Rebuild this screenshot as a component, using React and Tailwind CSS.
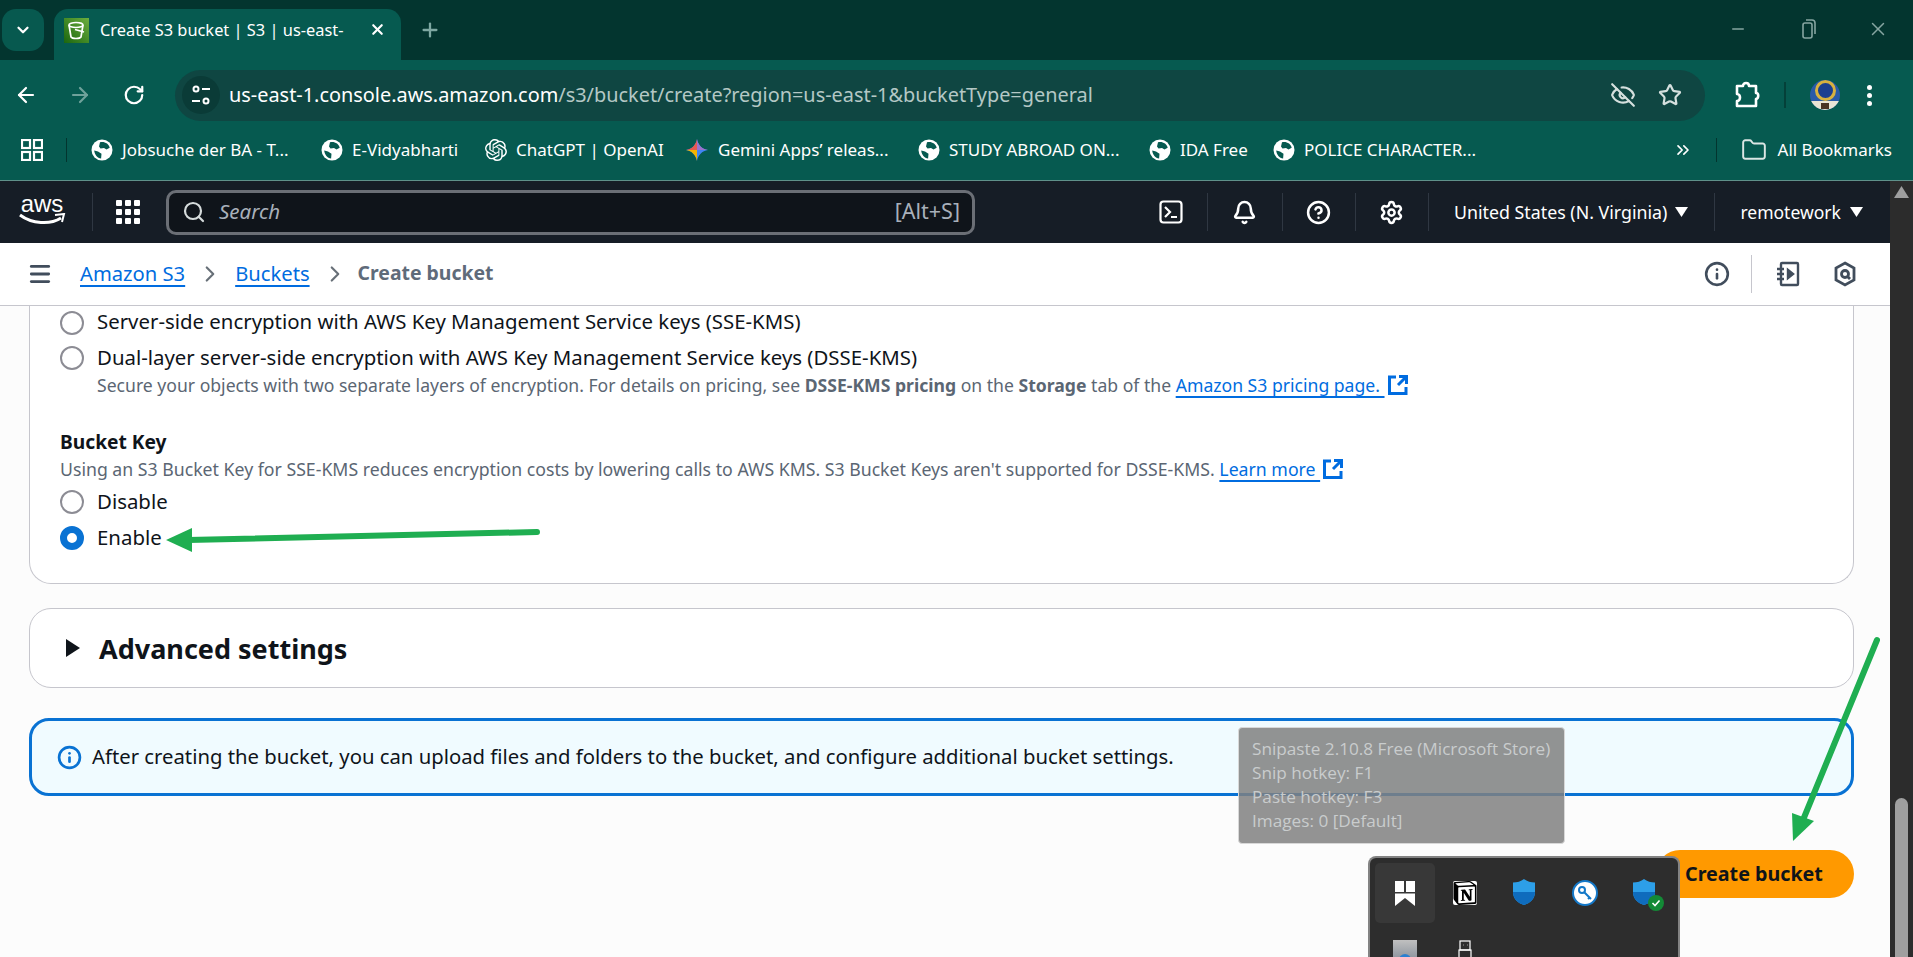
import { ArrowLeft, ArrowRight, RotateCw, Star, EyeOff, ChevronsRight, Folder, X, Plus, Minus, Search, Bell, CircleHelp, Settings, Info, ChevronDown, ChevronRight, Menu } from 'lucide-react';
import { SiOpenai, SiNotion } from 'react-icons/si';

function GlobeFav() {
  return (
    <svg width="22" height="22" viewBox="0 0 22 22" className="shrink-0">
      <circle cx="11" cy="11" r="10.500" fill="#fff" />
      <path d="M9 3.200c2.500-.6 5-.2 7 1.300 1.500 1.200 2.300 2.600 2.700 4.200l-3.200 1.800-2.500-1.500-3.500.4L8 7.500z" fill="#065a50" />
      <path d="M3.200 11.500l3.800 1 3.500 2.300-.4 4.800c-3.600-.4-6.500-3.800-6.900-8.100z" fill="#065a50" />
    </svg>
  );
}

function GeminiFav() {
  return (
    <svg width="24" height="24" viewBox="0 0 24 24" className="shrink-0">
      <path d="M12 1c1 6 5 10 11 11-6 1-10 5-11 11C11 17 7 13 1 12 7 11 11 7 12 1z" fill="#4285f4" />
      <path d="M12 1c1 6 5 10 11 11H12z" fill="#9b72cb" />
      <path d="M1 12c6-1 10-5 11-11v11z" fill="#e8594f" />
      <path d="M1 12h11v11C11 17 7 13 1 12z" fill="#f4b400" />
    </svg>
  );
}

function Bookmark({ icon, label, ml, textW }) {
  return (
    <div className={`flex items-center shrink-0 ${ml}`}>
      {icon}
      <span className={`ml-[9px] text-[17px] text-white whitespace-nowrap ${textW}`}>{label}</span>
    </div>
  );
}

function ExtLink() {
  return (
    <svg width="22" height="22" viewBox="0 0 22 22" fill="none" stroke="#006ce0" strokeWidth="3" className="inline-block align-[-4px] ml-[2px]">
      <path d="M9 3H2.500v16.500H19V13" />
      <path d="M12 2.500h7.500V10M19 3l-8 8" />
    </svg>
  );
}

function Radio({ checked }) {
  return checked ? (
    <span className="w-[24px] h-[24px] rounded-full border-[7px] border-[#0972d3] bg-white shrink-0" />
  ) : (
    <span className="w-[24px] h-[24px] rounded-full border-2 border-[#8c8c94] bg-white shrink-0" />
  );
}

function NavDivider({ ml }) {
  return <span className={`w-px h-[38px] bg-[#2f3742] shrink-0 ${ml}`} />;
}

function Caret() {
  return (
    <svg width="13" height="12" viewBox="0 0 13 12" className="shrink-0"><path d="M0 1h13L6.500 11z" fill="#fff" /></svg>
  );
}

function ShieldIcon({ check }) {
  return (
    <span className="relative w-[26px] h-[30px] block">
      <svg width="24" height="28" viewBox="0 0 24 28">
        <path d="M12 1c3 2.500 7 3.500 11 3.500V14c0 6-4 11-11 13C5 25 1 20 1 14V4.500C5 4.500 9 3.500 12 1z" fill="#2d9fe8" />
        <path d="M12 1v26C5 25 1 20 1 14h22c0 6-4 11-11 13z" fill="#0f6cbd" />
      </svg>
      {check && (
        <span className="absolute right-[-6px] bottom-[-3px] w-[16px] h-[16px] rounded-full bg-[#138a36] flex items-center justify-center">
          <svg width="10" height="10" viewBox="0 0 10 10" fill="none" stroke="#fff" strokeWidth="1.600"><path d="M1.500 5l2.500 2.500 4.500-5" /></svg>
        </span>
      )}
    </span>
  );
}

export default function App() {
  return (
    <div className="relative w-[1913px] h-[957px] overflow-hidden bg-[#fcfcfc] font-['Noto_Sans',sans-serif] flex flex-col">
      {/* --- Tab strip --- */}
      <div className="h-[60px] bg-[#03352f] flex items-end shrink-0 relative">
        <div className="absolute left-[2px] top-[9px] w-[42px] h-[42px] rounded-[14px] bg-[#07594f] flex items-center justify-center">
          <ChevronDown size={18} strokeWidth={3} color="#fff" />
        </div>
        <div className="relative ml-[54px] w-[347px] h-[51px] bg-[#065a50] rounded-t-[14px] flex items-center pl-[10px] pb-[9px]">
          <span className="w-[25px] h-[25px] bg-[linear-gradient(45deg,#1b660f,#6cae3e)] flex items-center justify-center shrink-0">
            <svg width="19" height="19" viewBox="0 0 19 19" fill="none" stroke="#fff" strokeWidth="1.700">
              <ellipse cx="9" cy="4" rx="7" ry="2.500" />
              <path d="M2 4l2 12c1.500 2 8.500 2 10 0l2-12" />
              <path d="M8 8.500l9 2.500" />
            </svg>
          </span>
          <span className="ml-[11px] text-[16.400px] text-white whitespace-nowrap">Create S3 bucket | S3 | us-east-</span>
          <X size={17} strokeWidth={3} color="#fff" className="absolute left-[315px] top-[12px]" />
        </div>
        <Plus size={22} color="#7ea8a2" strokeWidth={2.500} className="ml-[18px] mb-[19px]" />
        <div className="ml-auto flex items-center mb-[20px] text-[#86a5a1]">
          <Minus size={18} />
          <svg width="14" height="20" viewBox="0 0 14 20" fill="none" stroke="currentColor" strokeWidth="1.600" className="ml-[55px]">
            <rect x="1" y="4" width="9" height="15" rx="2" />
            <path d="M4 1h6c2 0 3 1 3 3v11" />
          </svg>
          <X size={22} strokeWidth={1.600} className="ml-[51px] mr-[24px]" />
        </div>
      </div>

      {/* --- Toolbar --- */}
      <div className="h-[61px] bg-[#065a50] flex items-center shrink-0 pt-[9px]">
        <ArrowLeft size={24} color="#fff" className="ml-[14px]" strokeWidth={2.200} />
        <ArrowRight size={24} color="#6fa29b" className="ml-[30px]" strokeWidth={2.200} />
        <RotateCw size={22} color="#fff" className="ml-[31px]" strokeWidth={2.400} />
        <div className="ml-[30px] w-[1530px] h-[51px] rounded-full bg-[#0f4642] flex items-center">
          <span className="ml-[7px] w-[38px] h-[38px] rounded-full bg-[#0a3b37] flex items-center justify-center shrink-0">
            <svg width="20" height="22" viewBox="0 0 20 22" fill="none" stroke="#fff" strokeWidth="2">
              <circle cx="5" cy="5" r="2.500" /><path d="M11 5h8" /><circle cx="15" cy="17" r="2.500" /><path d="M1 17h8" />
            </svg>
          </span>
          <span className="ml-[9px] text-[19.900px] whitespace-nowrap text-white">us-east-1.console.aws.amazon.com<span className="text-[#b4c8c5]">/s3/bucket/create?region=us-east-1&amp;bucketType=general</span></span>
          <EyeOff size={26} color="#d5e0de" className="ml-auto" />
          <Star size={24} color="#d5e0de" className="ml-[22px] mr-[23px]" strokeWidth={2.200} />
        </div>
        <svg width="26" height="28" viewBox="0 0 26 28" fill="none" stroke="#fff" strokeWidth="2.600" strokeLinejoin="round" className="ml-[29px]">
          <path d="M3 5h6c0-4 6-4 6 0h7v7c3 0 3 5 0 6v7H3v-5c4 0 4-7 0-7z" />
        </svg>
        <span className="ml-[24px] w-[2px] h-[26px] bg-[#044039]" />
        <span className="ml-[24px] w-[30px] h-[30px] rounded-full overflow-hidden flex flex-col items-center bg-[#2a5aa8]">
          <span className="w-[21px] h-[21px] rounded-full border-[3px] border-[#d8b13f] bg-[#1d3f8f] shrink-0" />
          <span className="w-full h-[9px] bg-[#e9e3d4] flex justify-center"><span className="w-[8px] h-[6px] bg-[#4a3324] mt-[2px]" /></span>
        </span>
        <span className="ml-[27px] flex flex-col gap-[3px]">
          <span className="w-[5px] h-[5px] rounded-full bg-white" />
          <span className="w-[5px] h-[5px] rounded-full bg-white" />
          <span className="w-[5px] h-[5px] rounded-full bg-white" />
        </span>
      </div>

      {/* --- Bookmarks --- */}
      <div className="h-[60px] bg-[#065a50] border-b border-[#5f918a] flex items-center shrink-0 pb-[2px]">
        <svg width="22" height="22" viewBox="0 0 22 22" fill="none" stroke="#fff" strokeWidth="2.200" className="ml-[21px] shrink-0">
          <rect x="1" y="1" width="8" height="8" /><rect x="13" y="1" width="8" height="8" /><rect x="1" y="13" width="8" height="8" /><rect x="13" y="13" width="8" height="8" />
        </svg>
        <span className="ml-[23px] w-px h-[24px] bg-[#03352f]" />
        <Bookmark ml="ml-[24px]" textW="w-[172px]" icon={<GlobeFav />} label="Jobsuche der BA - T..." />
        <Bookmark ml="ml-[27px]" textW="w-[107px]" icon={<GlobeFav />} label="E-Vidyabharti" />
        <Bookmark ml="ml-[26px]" textW="w-[143px]" icon={<SiOpenai size={22} color="#fff" />} label="ChatGPT | OpenAI" />
        <Bookmark ml="ml-[26px]" textW="w-[169px]" icon={<GeminiFav />} label="Gemini Apps’ releas..." />
        <Bookmark ml="ml-[31px]" textW="w-[174px]" icon={<GlobeFav />} label="STUDY ABROAD ON..." />
        <Bookmark ml="ml-[26px]" textW="w-[67px]" icon={<GlobeFav />} label="IDA Free" />
        <Bookmark ml="ml-[26px]" textW="w-[172px]" icon={<GlobeFav />} label="POLICE CHARACTER..." />
        <ChevronsRight size={20} color="#fff" className="ml-auto" />
        <span className="ml-[23px] w-px h-[24px] bg-[#03352f]" />
        <Folder size={26} color="#dbe6e4" strokeWidth={1.800} className="ml-[24px]" />
        <span className="ml-[11px] mr-[21px] text-[17px] text-white whitespace-nowrap">All Bookmarks</span>
      </div>

      {/* --- Page + scrollbar --- */}
      <div className="flex flex-1 min-h-0">
        <div className="flex-1 min-w-0 flex flex-col">
          {/* AWS nav */}
          <div className="h-[62px] bg-[#161d26] flex items-center shrink-0 text-white">
            <div className="ml-[18px] w-[48px] flex flex-col items-center leading-none">
              <span className="text-[24px] font-['Liberation_Sans',sans-serif] leading-[20px] mt-[-4px]">aws</span>
              <svg width="47" height="13" viewBox="0 0 47 13" fill="none" className="mt-[-1px]">
                <path d="M1 2c12 9 30 10 41 3" stroke="#fff" strokeWidth="3" />
                <path d="M36 2l9-1-2 8" stroke="#fff" strokeWidth="2" />
              </svg>
            </div>
            <NavDivider ml="ml-[26px]" />
            <div className="ml-[23px] grid grid-cols-3 gap-[3px] shrink-0">
              {[...Array(9)].map((_, i) => <span key={i} className="w-[6px] h-[6px] rounded-[1px] bg-white" />)}
            </div>
            <div className="ml-[26px] w-[809px] h-[45px] rounded-[10px] border-[3px] border-[#6b6f76] bg-[#0f141a] flex items-center">
              <Search size={24} color="#d5dbdb" className="ml-[13px]" strokeWidth={2.200} />
              <span className="ml-[13px] mb-[2px] text-[20.500px] italic text-[#a8b0ba]">Search</span>
              <span className="ml-auto mr-[12px] mb-[2px] text-[21.500px] text-[#a8b0ba]">[Alt+S]</span>
            </div>
            <svg width="24" height="24" viewBox="0 0 24 24" fill="none" stroke="#fff" strokeWidth="2.200" className="ml-[184px] shrink-0">
              <rect x="1.500" y="1.500" width="21" height="21" rx="3" /><path d="M6 7l5 5-5 5M12 17h6" />
            </svg>
            <NavDivider ml="ml-[24px]" />
            <Bell size={25} strokeWidth={2.400} className="ml-[24px]" />
            <NavDivider ml="ml-[25px]" />
            <CircleHelp size={25} strokeWidth={2.400} className="ml-[23px]" />
            <NavDivider ml="ml-[24px]" />
            <Settings size={25} strokeWidth={2.400} className="ml-[23px]" />
            <NavDivider ml="ml-[24px]" />
            <span className="ml-[25px] text-[17.800px] whitespace-nowrap">United States (N. Virginia)</span>
            <span className="ml-[8px]"><Caret /></span>
            <NavDivider ml="ml-[26px]" />
            <span className="ml-[25px] text-[17.500px] whitespace-nowrap">remotework</span>
            <span className="ml-[9px]"><Caret /></span>
          </div>

          {/* Breadcrumbs */}
          <div className="h-[63px] bg-white border-b border-[#c6c6cd] flex items-center shrink-0 text-[20.200px]">
            <Menu size={26} color="#414d5c" strokeWidth={2.600} className="ml-[27px]" />
            <a className="ml-[27px] mb-[2px] text-[#006ce0] underline decoration-2 underline-offset-4">Amazon S3</a>
            <ChevronRight size={26} color="#687078" className="ml-[12px]" />
            <a className="ml-[12px] mb-[2px] text-[#006ce0] underline decoration-2 underline-offset-4">Buckets</a>
            <ChevronRight size={26} color="#687078" className="ml-[12px]" />
            <span className="ml-[10px] mb-[2px] text-[19.400px] font-bold text-[#5f6b7a]">Create bucket</span>
            <Info size={26} color="#414d5c" strokeWidth={2.400} className="ml-auto" />
            <span className="ml-[21px] w-px h-[38px] bg-[#c6c6cd]" />
            <svg width="26" height="26" viewBox="0 0 26 26" fill="none" stroke="#414d5c" strokeWidth="2.400" className="ml-[23px]">
              <rect x="6" y="2" width="17" height="22" rx="1" /><path d="M2 8h7M2 13h7M2 18h7" /><path d="M13 9l5 4-5 4z" fill="#414d5c" />
            </svg>
            <svg width="24" height="26" viewBox="0 0 24 26" fill="none" stroke="#414d5c" strokeWidth="2.800" className="ml-[32px] mr-[33px]">
              <path d="M12 2l9 5v12l-9 5-9-5V7z" /><circle cx="12" cy="13" r="3.500" /><path d="M14 15l3 3" />
            </svg>
          </div>

          {/* Main content */}
          <div className="flex-1 min-h-0 flex flex-col pl-[29px] pr-[36px] text-[20.400px] text-[#0f141a]">
            <div className="h-[278px] shrink-0 bg-white border border-t-0 border-[#c6c6cd] rounded-b-[22px] pl-[30px] flex flex-col">
              <div className="h-[33px] flex items-center gap-[13px] shrink-0">
                <Radio /><span className="mb-[2px]">Server-side encryption with AWS Key Management Service keys (SSE-KMS)</span>
              </div>
              <div className="h-[34px] mt-[2px] flex items-center gap-[13px] shrink-0">
                <Radio /><span className="mb-[2px]">Dual-layer server-side encryption with AWS Key Management Service keys (DSSE-KMS)</span>
              </div>
              <p className="h-[24px] mt-[-2px] ml-[37px] text-[17.600px] leading-[24px] text-[#5b6673] whitespace-nowrap">
                Secure your objects with two separate layers of encryption. For details on pricing, see <b>DSSE-KMS pricing</b> on the <b>Storage</b> tab of the <a className="text-[#006ce0] underline decoration-2 underline-offset-4">Amazon S3 pricing page. </a><ExtLink />
              </p>
              <h3 className="h-[28px] mt-[31px] text-[19.200px] font-bold leading-[28px]">Bucket Key</h3>
              <p className="h-[24px] mt-[1px] text-[17.700px] leading-[24px] text-[#5b6673] whitespace-nowrap">
                Using an S3 Bucket Key for SSE-KMS reduces encryption costs by lowering calls to AWS KMS. S3 Bucket Keys aren't supported for DSSE-KMS. <a className="text-[#006ce0] underline decoration-2 underline-offset-4">Learn more </a><ExtLink />
              </p>
              <div className="h-[34px] mt-[4px] flex items-center gap-[13px] shrink-0">
                <Radio /><span className="mb-[2px]">Disable</span>
              </div>
              <div className="h-[34px] mt-[2px] flex items-center gap-[13px] shrink-0">
                <Radio checked /><span className="mb-[2px]">Enable</span>
              </div>
            </div>

            <div className="h-[80px] mt-[24px] shrink-0 bg-white border border-[#c6c6cd] rounded-[22px] flex items-center">
              <svg width="16" height="20" viewBox="0 0 16 20" className="ml-[35px]"><path d="M1 1l14 9-14 9z" fill="#0f141a" /></svg>
              <span className="ml-[18px] mt-[3px] text-[27px] font-bold">Advanced settings</span>
            </div>

            <div className="h-[78px] mt-[30px] shrink-0 bg-[#f0fbff] border-[3px] border-[#0972d3] rounded-[20px] flex items-center">
              <Info size={25} color="#0972d3" strokeWidth={2.600} className="ml-[25px]" />
              <span className="ml-[10px] mb-[2px] text-[20.300px]">After creating the bucket, you can upload files and folders to the bucket, and configure additional bucket settings.</span>
            </div>

            <button className="self-end w-[198px] h-[48px] mt-[54px] shrink-0 rounded-full bg-[#ff9900] text-[19.700px] font-bold text-[#0f141a] text-left pl-[29px]">Create bucket</button>
          </div>
        </div>

        {/* Scrollbar */}
        <div className="w-[23px] bg-[#2c2c2c] shrink-0 flex flex-col items-center pt-[5px]">
          <svg width="15" height="12" viewBox="0 0 15 12"><path d="M7.500 0L15 12H0z" fill="#9f9f9f" /></svg>
          <span className="w-[13px] mt-auto h-[159px] rounded-t-full bg-[#9f9f9f]" />
        </div>
      </div>

      {/* --- Arrows drawn over the page --- */}
      <svg className="absolute left-0 top-0 pointer-events-none" width="1913" height="957" viewBox="0 0 1913 957" fill="none">
        <path d="M537 532L188 540" stroke="#1fae51" strokeWidth="6" strokeLinecap="round" />
        <path d="M166 540l26-12v24z" fill="#1fae51" />
        <path d="M1877 640L1803 820" stroke="#1fae51" strokeWidth="6" strokeLinecap="round" />
        <path d="M1793 841l-1-28 22 8z" fill="#1fae51" />
      </svg>

      {/* --- Snipaste tooltip --- */}
      <div className="absolute left-[1238px] top-[727px] w-[327px] h-[117px] rounded-[4px] border border-[#d8d8d8] bg-[#808080]/85 pl-[13px] pt-[9px] text-[17.200px] leading-[24px] text-[#c9cccd] font-['Open_Sans',sans-serif] whitespace-nowrap">
        <div>Snipaste 2.10.8 Free (Microsoft Store)</div>
        <div>Snip hotkey: F1</div>
        <div>Paste hotkey: F3</div>
        <div>Images: 0 [Default]</div>
      </div>

      {/* --- Windows tray flyout --- */}
      <div className="absolute left-[1368px] top-[856px] w-[312px] h-[120px] rounded-[8px] bg-[#2d2d2d] border-2 border-[#bdbdbd]/60 p-[5px]">
        <div className="grid grid-cols-5 w-[300px]">
          <div className="h-[60px] rounded-[5px] bg-[#383838] flex items-center justify-center">
            <svg width="20" height="25" viewBox="0 0 20 25" fill="#fff">
              <rect x="0" y="0" width="9" height="11" /><rect x="11" y="0" width="9" height="11" />
              <path d="M0 12.500h20V25l-10-8-10 8z" />
            </svg>
          </div>
          <div className="h-[60px] flex items-center justify-center"><span className="bg-white rounded-[2px] flex"><SiNotion size={24} color="#000" /></span></div>
          <div className="h-[60px] flex items-center justify-center"><ShieldIcon /></div>
          <div className="h-[60px] flex items-center justify-center">
            <svg width="26" height="26" viewBox="0 0 26 26" fill="none">
              <circle cx="13" cy="13" r="12" fill="#fff" stroke="#1478c8" strokeWidth="2" />
              <circle cx="10" cy="10" r="3" stroke="#1478c8" strokeWidth="2" /><path d="M12 12l7 7M16 19l2-2" stroke="#1478c8" strokeWidth="2" />
            </svg>
          </div>
          <div className="h-[60px] flex items-center justify-center"><ShieldIcon check /></div>
          <div className="h-[60px] flex items-start justify-center pt-[17px]">
            <span className="w-[24px] h-[30px] bg-[linear-gradient(#c0c0c0,#6e7a8a)] flex items-end justify-center pb-[4px]"><span className="w-[12px] h-[12px] rounded-full bg-[#2b7fd0]" /></span>
          </div>
          <div className="h-[60px] flex items-start justify-center pt-[17px]">
            <svg width="14" height="30" viewBox="0 0 14 30" fill="none" stroke="#fff" strokeWidth="1.200">
              <rect x="2" y="1" width="10" height="9" /><rect x="1" y="10" width="12" height="20" />
              <path d="M5 5h.5M9 5h.5" />
            </svg>
          </div>
        </div>
      </div>
    </div>
  );
}
